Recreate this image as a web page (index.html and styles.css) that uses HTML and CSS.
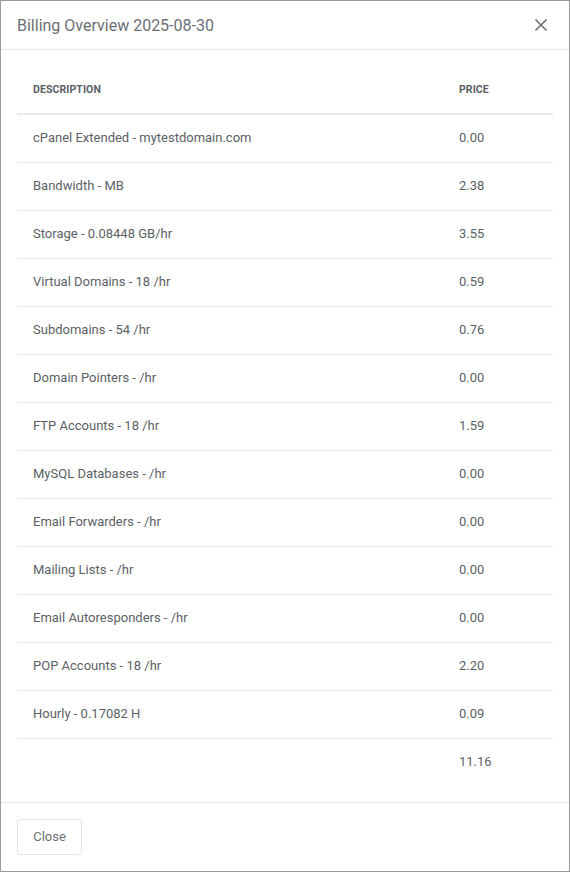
FILE: index.html
```html
<!DOCTYPE html>
<html>
<head>
<meta charset="utf-8">
<link rel="stylesheet" href="styles.css">
</head>
<body>
<div class="modal">
  <div class="modal-header">
    <h1 class="modal-title">Billing Overview 2025-08-30</h1>
    <button class="close-x" aria-label="Close">
      <svg width="14" height="14" viewBox="0 0 14 14"><path d="M1.5 1.5 L12.5 12.5 M12.5 1.5 L1.5 12.5" stroke="#6b6f75" stroke-width="1.6" fill="none"/></svg>
    </button>
  </div>
  <div class="modal-body">
    <table class="bill">
      <colgroup><col class="c-desc"><col class="c-price"></colgroup>
      <thead>
        <tr><th>Description</th><th>Price</th></tr>
      </thead>
      <tbody>
        <tr><td>cPanel Extended - mytestdomain.com</td><td>0.00</td></tr>
        <tr><td>Bandwidth - MB</td><td>2.38</td></tr>
        <tr><td>Storage - 0.08448 GB/hr</td><td>3.55</td></tr>
        <tr><td>Virtual Domains - 18 /hr</td><td>0.59</td></tr>
        <tr><td>Subdomains - 54 /hr</td><td>0.76</td></tr>
        <tr><td>Domain Pointers - /hr</td><td>0.00</td></tr>
        <tr><td>FTP Accounts - 18 /hr</td><td>1.59</td></tr>
        <tr><td>MySQL Databases - /hr</td><td>0.00</td></tr>
        <tr><td>Email Forwarders - /hr</td><td>0.00</td></tr>
        <tr><td>Mailing Lists - /hr</td><td>0.00</td></tr>
        <tr><td>Email Autoresponders - /hr</td><td>0.00</td></tr>
        <tr><td>POP Accounts - 18 /hr</td><td>2.20</td></tr>
        <tr><td>Hourly - 0.17082 H</td><td>0.09</td></tr>
        <tr class="total"><td></td><td>11.16</td></tr>
      </tbody>
    </table>
  </div>
  <div class="modal-footer">
    <button class="btn">Close</button>
  </div>
</div>
</body>
</html>
```
FILE: styles.css
```css
html, body { margin: 0; padding: 0; background: #fff; }
body { font-family: Roboto, "Noto Sans", Arial, sans-serif; color: #555a60; }
.modal {
  width: 570px; height: 872px; box-sizing: border-box;
  border: 1px solid #9a9a9a; display: flex; flex-direction: column;
}
.modal-header {
  height: 48px; border-bottom: 1px solid #e6e8eb;
  display: flex; align-items: center; justify-content: space-between;
  padding: 0 16px;
}
.modal-title { margin: 0; font-size: 16px; font-weight: 400; color: #6b6f75; }
.close-x { border: 0; background: none; padding: 0; width: 14px; height: 14px; margin-right: 5px; display: flex; cursor: pointer; }
.modal-body { flex: 1; padding: 16px; }
.bill { width: 536px; border-collapse: collapse; table-layout: fixed; }
.c-desc { width: 426px; }
.c-price { width: 110px; }
.bill th {
  text-align: left; font-size: 10.5px; font-weight: 700; text-transform: uppercase;
  color: #5a5e64; padding: 0 16px; height: 47px; border-bottom: 2px solid #e9ebee;
  letter-spacing: 0.1px;
}
.bill td {
  font-size: 13px; line-height: 17px; color: #5b5f65; padding: 14px 16px 16px;
  border-bottom: 1px solid #e9ebee;
}
.bill tr.total td { border-bottom: 0; }
.modal-footer { height: 69px; border-top: 1px solid #e6e8eb; padding: 16px; box-sizing: border-box; }
.btn {
  font-family: inherit; font-size: 13px; color: #6b6f75; background: #fff;
  border: 1px solid #e3e5e8; border-radius: 3px; height: 36px; width: 65px; padding: 0 0 2px;
}
```
